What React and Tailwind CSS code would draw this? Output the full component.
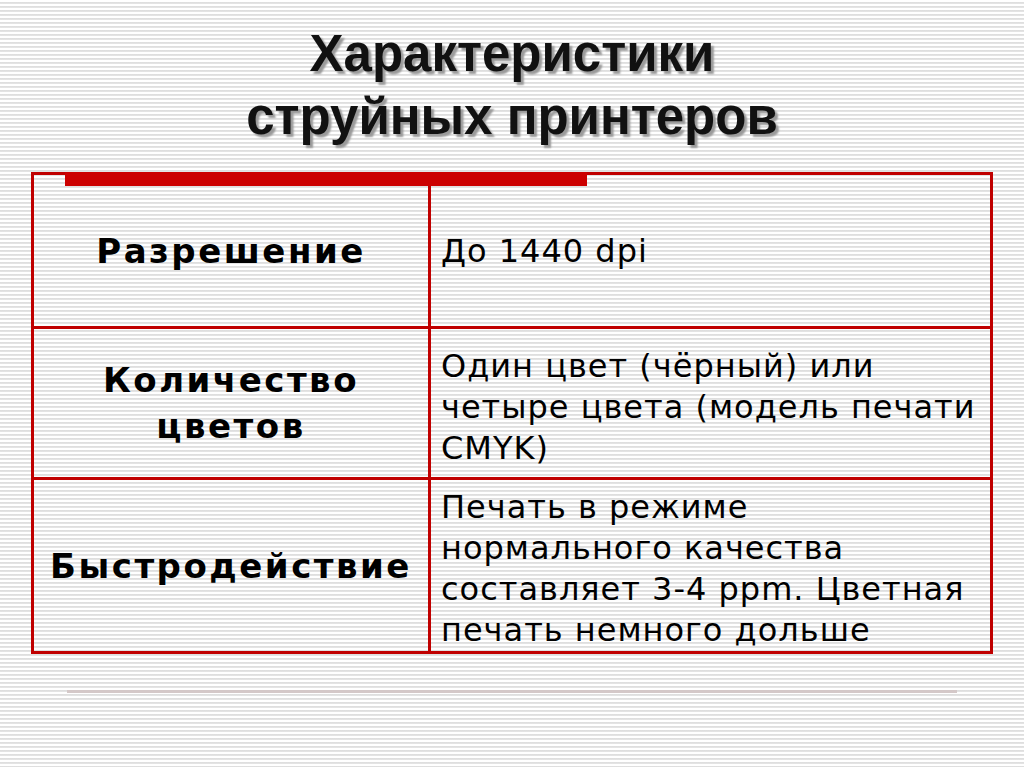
export default function App() {
  const rows = [
    { label: ['Разрешение'], value: ['До 1440 dpi'], h: 'h-[151px]', align: 'justify-start pt-[56px]' },
    { label: ['Количество', 'цветов'], value: ['Один цвет (чёрный) или', 'четыре цвета (модель печати', 'CMYK)'], h: 'h-[151px]', align: 'justify-start pt-[17px]' },
    { label: ['Быстродействие'], value: ['Печать в режиме', 'нормального качества', 'составляет 3-4 ppm. Цветная', 'печать немного дольше'], h: 'h-[174px]', align: 'justify-start pt-[7px]' },
  ];

  return (
    <div className="w-[1024px] h-[767px] overflow-hidden bg-[repeating-linear-gradient(to_bottom,#ffffff_0px,#ffffff_2px,#dcdcdc_2px,#e6e6e6_4px)] flex flex-col items-center">
      <div className="pt-[22px] text-center font-['Liberation_Sans',Arial,sans-serif] font-bold text-[51px] leading-[63px] text-[#111] [text-shadow:3px_3px_2px_#9a9a9a]">
        <div>Характеристики</div>
        <div>струйных принтеров</div>
      </div>

      <div className="relative mt-[24px] w-[962px] border-[3px] border-[#c00000] flex flex-col">
        <div className="absolute left-[31px] top-[-3px] w-[522px] h-[14px] bg-[#cc0000]" />
        {rows.map((r, i) => (
          <div key={i} className={`flex ${r.h} ${i > 0 ? 'border-t-[3px] border-[#c00000]' : ''}`}>
            <div className="w-[397px] shrink-0 flex flex-col items-center justify-center border-r-[3px] border-[#c00000] font-['DejaVu_Sans',Verdana,sans-serif] font-bold text-[34px] tracking-[2.5px] leading-[46px] text-black">
              {r.label.map((t) => (
                <div key={t}>{t}</div>
              ))}
            </div>
            <div className={`flex-1 flex flex-col ${r.align} pl-[10px] font-['DejaVu_Sans',Tahoma,sans-serif] text-[32px] tracking-[1px] leading-[41px] text-black`}>
              {r.value.map((t) => (
                <div key={t} className="whitespace-nowrap">{t}</div>
              ))}
            </div>
          </div>
        ))}
      </div>

      <div className="mt-[36px] w-[890px] h-[3px] bg-[#d4c8c8]" />
    </div>
  );
}
